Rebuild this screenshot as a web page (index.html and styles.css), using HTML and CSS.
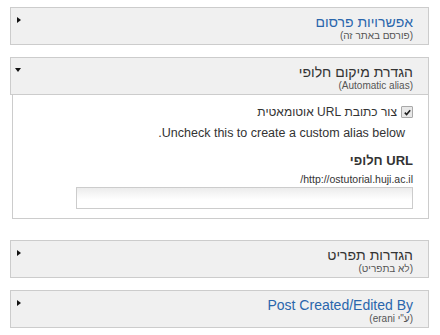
FILE: index.html
```html
<!DOCTYPE html>
<html lang="he" dir="rtl">
<head>
  <meta charset="UTF-8">
  <title>אפשרויות</title>
  <link rel="stylesheet" href="styles.css">
</head>
<body>
  <div class="fieldset collapsed">
    <div class="legend">
      <div class="legend-text">
        <div class="title link">אפשרויות פרסום</div>
        <div class="summary">(פורסם באתר זה)</div>
      </div>
      <span class="arrow right"></span>
    </div>
  </div>

  <div class="fieldset open">
    <div class="legend">
      <div class="legend-text">
        <div class="title">הגדרת מיקום חלופי</div>
        <div class="summary">(Automatic alias)</div>
      </div>
      <span class="arrow down"></span>
    </div>
    <div class="panel">
      <label class="check-row">
        <input type="checkbox" class="check" checked>
        <span>צור כתובת URL אוטומאטית</span>
      </label>
      <div class="description">Uncheck this to create a custom alias below.</div>
      <div class="field-label">URL חלופי</div>
      <div class="prefix">http://ostutorial.huji.ac.il/</div>
      <input type="text" class="text-input">
    </div>
  </div>

  <div class="fieldset collapsed">
    <div class="legend">
      <div class="legend-text">
        <div class="title">הגדרות תפריט</div>
        <div class="summary">(לא בתפריט)</div>
      </div>
      <span class="arrow right"></span>
    </div>
  </div>

  <div class="fieldset collapsed">
    <div class="legend">
      <div class="legend-text">
        <div class="title link">Post Created/Edited By</div>
        <div class="summary">(ע"י erani)</div>
      </div>
      <span class="arrow right"></span>
    </div>
  </div>
</body>
</html>
```

FILE: styles.css
```css
* { box-sizing: border-box; }
body {
  margin: 0;
  padding: 7px 11px 0 10px;
  font-family: 'Liberation Sans', Arial, sans-serif;
  color: #333;
  background: #fff;
  direction: rtl;
}
.fieldset {
  margin-bottom: 12px;
}
.fieldset.open {
  margin-bottom: 21px;
}
.legend {
  display: flex;
  justify-content: space-between;
  align-items: flex-start;
  height: 38px;
  padding: 6px 15px 0 6px;
  background: #f0f0f0;
  border: 1px solid #ccc;
}
.title {
  font-size: 14px;
  line-height: 16px;
  color: #333;
}
.title.link { color: #2a66ac; }
.summary {
  font-size: 10px;
  line-height: 12px;
  color: #555;
}
.arrow {
  width: 0;
  height: 0;
  border-style: solid;
}
.arrow.right {
  margin-top: 3px;
  border-width: 3px 0 3px 4px;
  border-color: transparent transparent transparent #111;
}
.arrow.down {
  margin-top: 4px;
  margin-left: -2px;
  border-width: 4px 3.5px 0 3.5px;
  border-color: #111 transparent transparent transparent;
}
.panel {
  margin-left: 2px;
  height: 124px;
  padding: 10px 15px 0 0;
  border: 1px solid #ccc;
  border-top: none;
}
.check-row {
  display: flex;
  align-items: center;
  gap: 4px;
  font-size: 12px;
  line-height: 14px;
}
.check {
  appearance: none;
  margin: 0;
  width: 12px;
  height: 12px;
  border: 1px solid #a9a9a9;
  border-radius: 1px;
  background: #e8e8e8 url("data:image/svg+xml,%3Csvg xmlns='http://www.w3.org/2000/svg' viewBox='0 0 10 10'%3E%3Cpath d='M2 5.2 L4 7.3 L8 2.6' fill='none' stroke='%23222' stroke-width='1.8'/%3E%3C/svg%3E") center / 9px 9px no-repeat;
}
.description {
  margin-top: 7px;
  padding-right: 8px;
  font-size: 12.5px;
  line-height: 14px;
}
.field-label {
  margin-top: 13px;
  font-size: 13px;
  font-weight: bold;
  line-height: 16px;
}
.prefix {
  margin-top: 4px;
  font-size: 10.5px;
  line-height: 12px;
}
.text-input {
  display: block;
  margin-top: 2px;
  width: 337px;
  height: 22px;
  border: 1px solid #ccc;
  background: linear-gradient(#ececec, #fff 60%);
}
```
